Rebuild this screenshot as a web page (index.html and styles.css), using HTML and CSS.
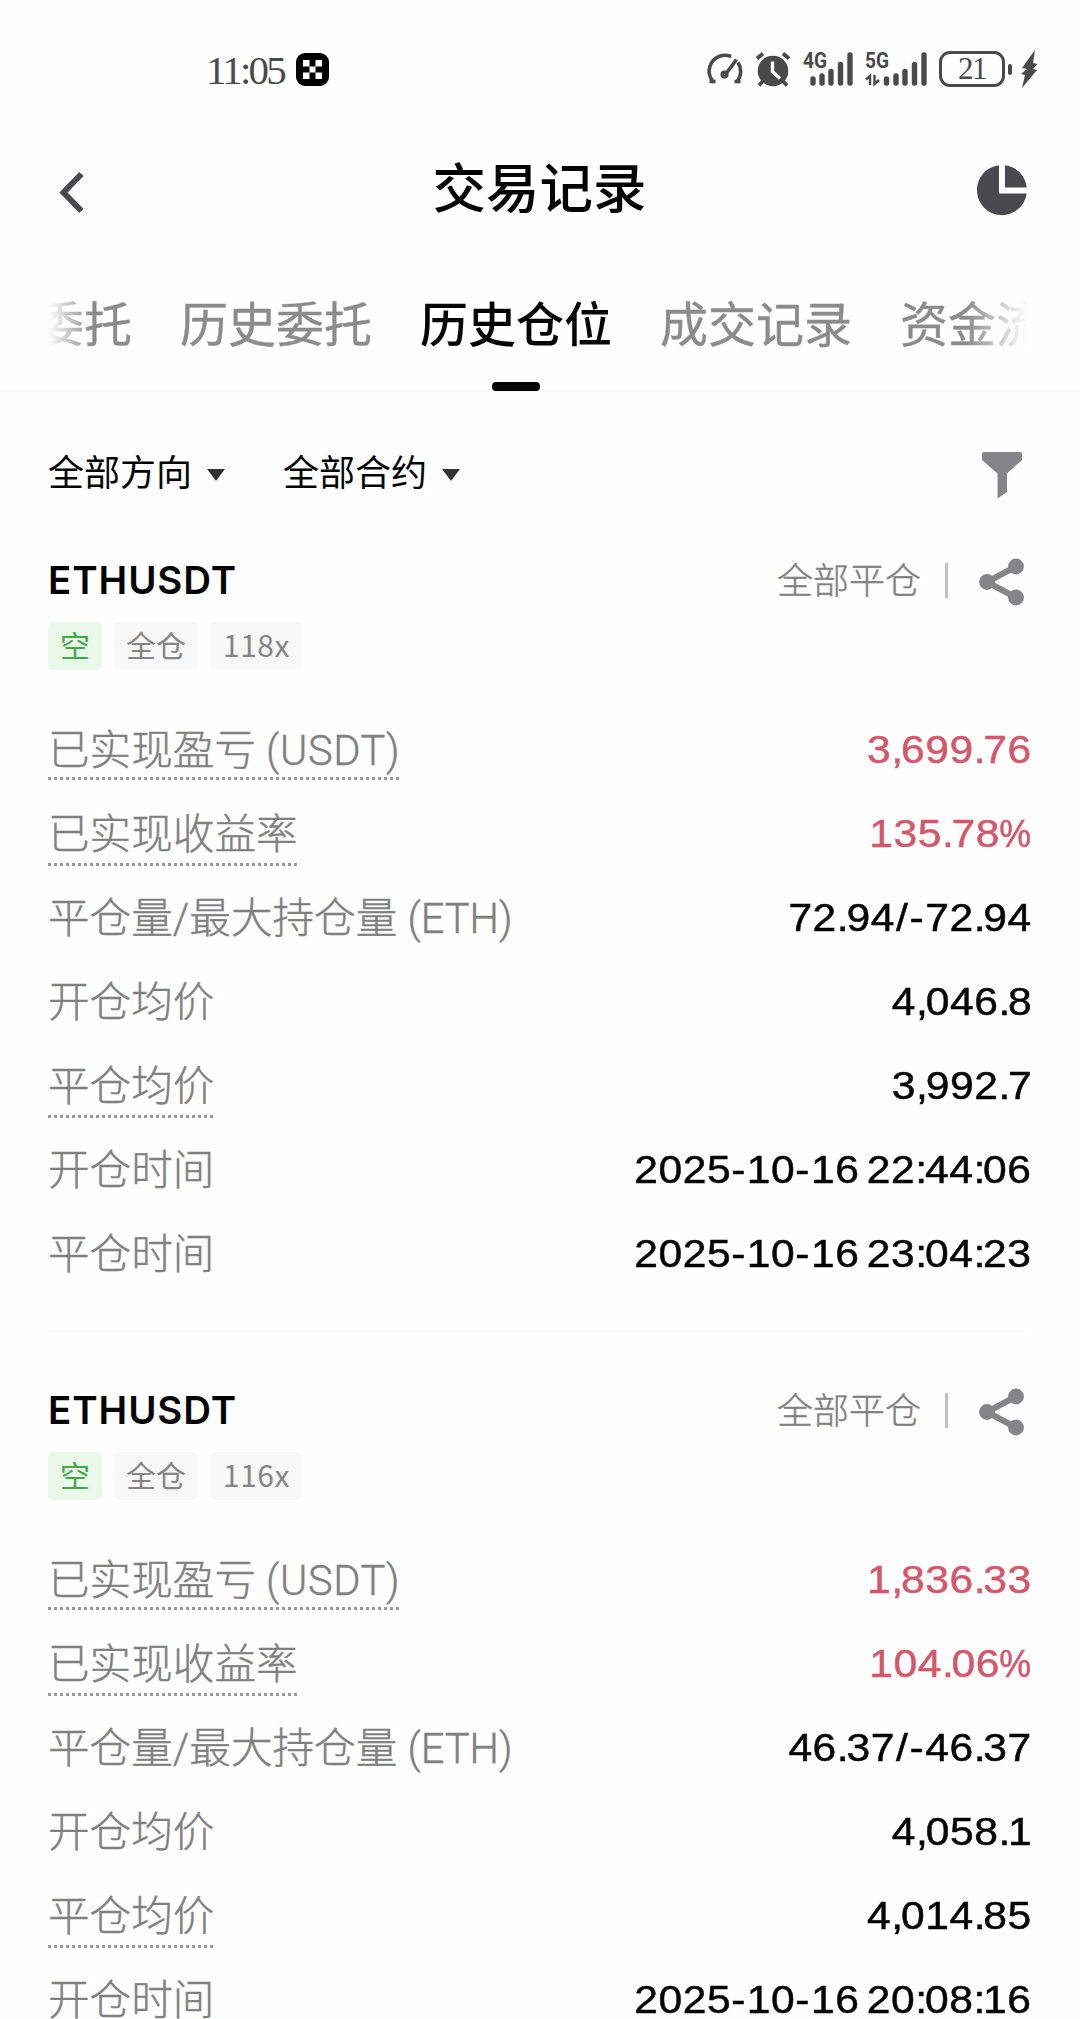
FILE: index.html
```html
<!DOCTYPE html>
<html lang="zh-CN">
<head>
<meta charset="utf-8">
<title>交易记录</title>
<link rel="stylesheet" href="styles.css">
</head>
<body>
<svg class="defs" width="0" height="0">
  <symbol id="share" viewBox="0 0 46 48">
    <path d="M8 24 37 8.500M8 24 37 39.500" stroke="currentColor" stroke-width="6" fill="none"/>
    <circle cx="8" cy="24" r="7.900" fill="currentColor"/><circle cx="37" cy="8.500" r="7.900" fill="currentColor"/><circle cx="37" cy="39.500" r="7.900" fill="currentColor"/>
  </symbol>
</svg>
<div class="status">
  <div class="clock"><span class="time">11:05</span>
    <svg width="33" height="33" viewBox="0 0 33 33"><rect width="33" height="33" rx="9"/><path fill="#fff" d="M7 7h6.500v6.500H7zM19.500 7H26v6.500h-6.500zM13.500 13.500h6v6h-6zM7 19.500h6.500V26H7zM19.500 19.500H26V26h-6.500z"/></svg>
  </div>
  <div class="indicators">
    <svg width="36" height="38" viewBox="0 0 36 38" fill="none" stroke="#4a4a4a" stroke-width="3.600"><path d="M7 32.500A15.800 15.800 0 0 1 24 6.500M31 12.500A15.800 15.800 0 0 1 29 32.500M2.500 31.500h6M27.500 31.500h6"/><path d="M18 25 29.500 9.500"/><circle cx="17.500" cy="24.500" r="2.300"/></svg>
    <svg class="alarm" width="36" height="38" viewBox="0 0 36 38"><circle cx="18" cy="21" r="15.300" fill="#4a4a4a"/><path d="M2 8.500 8 3.500M34 8.500 28 3.500M8 31 4 35.500M28 31l4 4.500" stroke="#4a4a4a" stroke-width="3.800"/><path d="M17.500 11.500v10l7.500 7" stroke="#fff" stroke-width="3.400" fill="none"/></svg>
    <svg class="sig4" width="50" height="38" viewBox="0 0 50 38"><text class="net" x="0" y="18" textLength="24" lengthAdjust="spacingAndGlyphs">4G</text><path d="M10 29v4M19 26v7M28 21.500V33M37.500 14.500V33M47 5v28" stroke="#4a4a4a" stroke-width="5.400" stroke-linecap="round"/></svg>
    <svg class="sig5" width="62" height="38" viewBox="0 0 62 38"><text class="net" x="0" y="18" textLength="24" lengthAdjust="spacingAndGlyphs">5G</text><path d="M5 35V26L1 29.500M9.500 25v9l4.500-4" stroke="#4a4a4a" stroke-width="2.400" fill="none"/><path d="M21.500 29v4M31 26v7M40 21.500V33M49.500 14.500V33M59 5v28" stroke="#4a4a4a" stroke-width="5.400" stroke-linecap="round"/></svg>
    <div class="battery">21</div>
    <i class="nub"></i>
    <svg class="bolt" width="18" height="38" viewBox="0 0 18 38" fill="#4a4a4a"><path d="M15 0 2 18l5 1-6 5 4 1-3 13L17 20l-4-1 4.500-5-4.500-1z"/></svg>
  </div>
</div>

<header class="header">
  <svg class="back" width="50" height="50" viewBox="0 0 50 50" fill="none" stroke="#4a494f" stroke-width="6"><path d="M33.500 7 15.500 25.500 33.500 44"/></svg>
  <h1>交易记录</h1>
  <svg width="50" height="51" viewBox="0 0 50 51" fill="#4a494f"><path d="M22 .3V28.500H49.700A25 25 0 1 1 22 .3Z"/><path d="M28 .3V22.500H49.700A25 25 0 0 0 28 .3Z"/></svg>
</header>

<nav class="tabbar"><div class="tabs">
  <span class="tab">委托</span><span class="tab">历史委托</span><span class="tab active">历史仓位</span><span class="tab">成交记录</span><span class="tab">资金流水</span>
</div></nav>

<div class="filters">
  <span class="select">全部方向<svg width="18" height="12" viewBox="0 0 18 12"><path d="M0 0h18L9 12z"/></svg></span>
  <span class="select">全部合约<svg width="18" height="12" viewBox="0 0 18 12"><path d="M0 0h18L9 12z"/></svg></span>
  <svg class="funnel" width="40" height="47" viewBox="0 0 40 47"><path d="M2 0h36q2 0 2 2v6L25 21.500V40l-9.500 6.500v-25L0 8V2q0-2 2-2z"/></svg>
</div>

<section class="card">
  <div class="head"><h2>ETHUSDT</h2><span class="state">全部平仓</span><i class="bar"></i><svg class="share" width="46" height="48"><use href="#share"/></svg></div>
  <div class="tags"><span class="tag short">空</span><span class="tag">全仓</span><span class="tag lev">118x</span></div>
  <dl class="rows">
    <div class="row first"><dt class="hint">已实现盈亏 <span class="unit">(USDT)</span></dt><dd class="red">3<i class="p">,</i>699<i class="p">.</i>76</dd></div>
    <div class="row"><dt class="hint">已实现收益率</dt><dd class="red">135<i class="p">.</i>78<i class="pct">%</i></dd></div>
    <div class="row"><dt>平仓量/最大持仓量 (ETH)</dt><dd>72<i class="p">.</i>94<i class="sl">/</i><i class="d">-</i>72<i class="p">.</i>94</dd></div>
    <div class="row"><dt>开仓均价</dt><dd>4<i class="p">,</i>046<i class="p">.</i>8</dd></div>
    <div class="row"><dt class="hint">平仓均价</dt><dd>3<i class="p">,</i>992<i class="p">.</i>7</dd></div>
    <div class="row"><dt>开仓时间</dt><dd>2025<i class="d">-</i>10<i class="d">-</i>16 22<i class="p">:</i>44<i class="p">:</i>06</dd></div>
    <div class="row"><dt>平仓时间</dt><dd>2025<i class="d">-</i>10<i class="d">-</i>16 23<i class="p">:</i>04<i class="p">:</i>23</dd></div>
  </dl>
</section>

<section class="card last">
  <div class="head"><h2>ETHUSDT</h2><span class="state">全部平仓</span><i class="bar"></i><svg class="share" width="46" height="48"><use href="#share"/></svg></div>
  <div class="tags"><span class="tag short">空</span><span class="tag">全仓</span><span class="tag lev">116x</span></div>
  <dl class="rows">
    <div class="row first"><dt class="hint">已实现盈亏 <span class="unit">(USDT)</span></dt><dd class="red">1<i class="p">,</i>836<i class="p">.</i>33</dd></div>
    <div class="row"><dt class="hint">已实现收益率</dt><dd class="red">104<i class="p">.</i>06<i class="pct">%</i></dd></div>
    <div class="row"><dt>平仓量/最大持仓量 (ETH)</dt><dd>46<i class="p">.</i>37<i class="sl">/</i><i class="d">-</i>46<i class="p">.</i>37</dd></div>
    <div class="row"><dt>开仓均价</dt><dd>4<i class="p">,</i>058<i class="p">.</i>1</dd></div>
    <div class="row"><dt class="hint">平仓均价</dt><dd>4<i class="p">,</i>014<i class="p">.</i>85</dd></div>
    <div class="row"><dt>开仓时间</dt><dd>2025<i class="d">-</i>10<i class="d">-</i>16 20<i class="p">:</i>08<i class="p">:</i>16</dd></div>
  </dl>
</section>
</body>
</html>
```
FILE: styles.css
```css
* { box-sizing: border-box; margin: 0; padding: 0; }
html, body { height: 2019px; overflow: hidden; }
body { width: 1080px; background: #fefefe; color: #050505; font-family: "Noto Sans CJK SC", sans-serif; }
svg { display: block; flex: none; }
.defs { position: absolute; }

.status { height: 108px; padding: 30px 42px 0 206px; display: flex; align-items: center; justify-content: space-between; }
.clock { display: flex; align-items: center; gap: 12px; }
.time { font: 41px/40px "Liberation Serif", serif; letter-spacing: -2.8px; color: #4a4a4a; width: 78px; white-space: nowrap; margin-top: 2px; }
.indicators { display: flex; align-items: center; margin-top: 0; }
.alarm { margin-left: 12px; }
.sig4 { margin-left: 12px; overflow: visible; }
.sig5 { margin-left: 12px; overflow: visible; }
.net { font: bold 22px Roboto, sans-serif; fill: #4a4a4a; }
.battery { margin-left: 12px; width: 66px; height: 36px; border: 3px solid #4a4a4a; border-radius: 11px; font: 31px/30px "Liberation Serif", serif; text-align: center; letter-spacing: -1.5px; color: #4a4a4a; }
.nub { width: 4px; height: 11px; border-radius: 2px; background: #4a4a4a; margin: 0 8px 0 3px; }

.header { height: 164px; padding: 0 53px 0 48px; display: flex; align-items: center; justify-content: space-between; }
.back { margin-top: 4px; }
.header h1 { font-size: 53.500px; line-height: 78px; font-weight: 500; margin-top: -10px; margin-left: 4px; }

.tabbar { height: 120px; border-bottom: 2px solid #f7f7f7; padding: 0 52px 0 48px; }
.tabs { height: 119px; display: flex; gap: 48px; overflow: hidden; -webkit-mask-image: linear-gradient(90deg, transparent, #000 44px, #000 calc(100% - 62px), transparent); mask-image: linear-gradient(90deg, transparent, #000 44px, #000 calc(100% - 62px), transparent); }
.tab { flex: none; font-size: 48px; line-height: 70px; padding-top: 14px; color: #8b8b8b; -webkit-text-stroke: .4px currentColor; display: flex; flex-direction: column; align-items: center; justify-content: space-between; }
.tab:first-child { margin-left: -12px; }
.tab.active { color: #050505; font-weight: 500; -webkit-text-stroke: 0; }
.tab.active::after { content: ""; width: 48px; height: 9px; border-radius: 4px; background: #050505; }

.filters { height: 110px; padding: 54px 58px 0 48px; display: flex; align-items: center; }
.select { display: flex; align-items: center; gap: 15px; width: 235px; font-size: 36px; line-height: 52px; margin-top: -8px; }
.select svg { fill: #333; margin-top: 10px; }
.funnel { margin-left: auto; margin-top: 2px; fill: #858489; }

.card { height: 830px; padding: 54px 0 34px; margin: 0 55px 0 48px; border-bottom: 2px solid #f7f7f7; }
.last { height: 687px; padding-bottom: 0; border-bottom: 0; }
.head { height: 48px; display: flex; align-items: center; }
.head h2 { font: 600 38.500px/48px Inter, sans-serif; letter-spacing: .9px; margin-right: auto; }
.state { font-size: 36px; line-height: 48px; font-weight: 300; color: #808080; -webkit-text-stroke: .4px currentColor; margin-top: -4px; }
.bar { width: 3px; height: 35px; background: #c0c0c0; margin: 0 32px 0 24px; }
.share { color: #858489; margin: 4px 0 0 -1px; }
.tags { margin: 18px 0 38px; display: flex; gap: 12px; }
.tag { height: 48px; padding: 0 12px; border-radius: 5px; background: #f7f7f7; color: #858585; font-size: 30px; line-height: 45px; }
.tag.short { background: #e9f8e9; color: #43a84a; }
.tag.lev { padding: 0 12px 0 13px; letter-spacing: .5px; }
.row { height: 84px; display: flex; align-items: center; justify-content: space-between; margin-right: -7px; }
dt { height: 62px; line-height: 63px; font-family: Roboto, "Noto Sans CJK SC", sans-serif; font-size: 41.600px; font-weight: 300; color: #808080; -webkit-text-stroke: .4px currentColor; white-space: nowrap; }
.unit { letter-spacing: .6px; }
.hint { background: repeating-linear-gradient(90deg, #999 0 3px, transparent 3px 6px) left bottom / 100% 3px no-repeat; }
.row:not(.first) .hint { height: 63px; line-height: 63px; }
.first .hint { height: 60px; line-height: 62px; }
dd { font: 39.500px/58px "Liberation Sans", sans-serif; letter-spacing: .5px; word-spacing: -4.6px; white-space: nowrap; transform: scaleX(1.078); transform-origin: right center; margin-top: -2px; -webkit-text-stroke: .5px currentColor; }
dd i { font-style: normal; }
.p { letter-spacing: -2px; }
.d { letter-spacing: 1.4px; }
.sl { margin: 0 1px; }
.pct { display: inline-block; transform: scaleX(.84); transform-origin: right center; margin-left: -6px; }
.red { color: #d5586a; }
```
